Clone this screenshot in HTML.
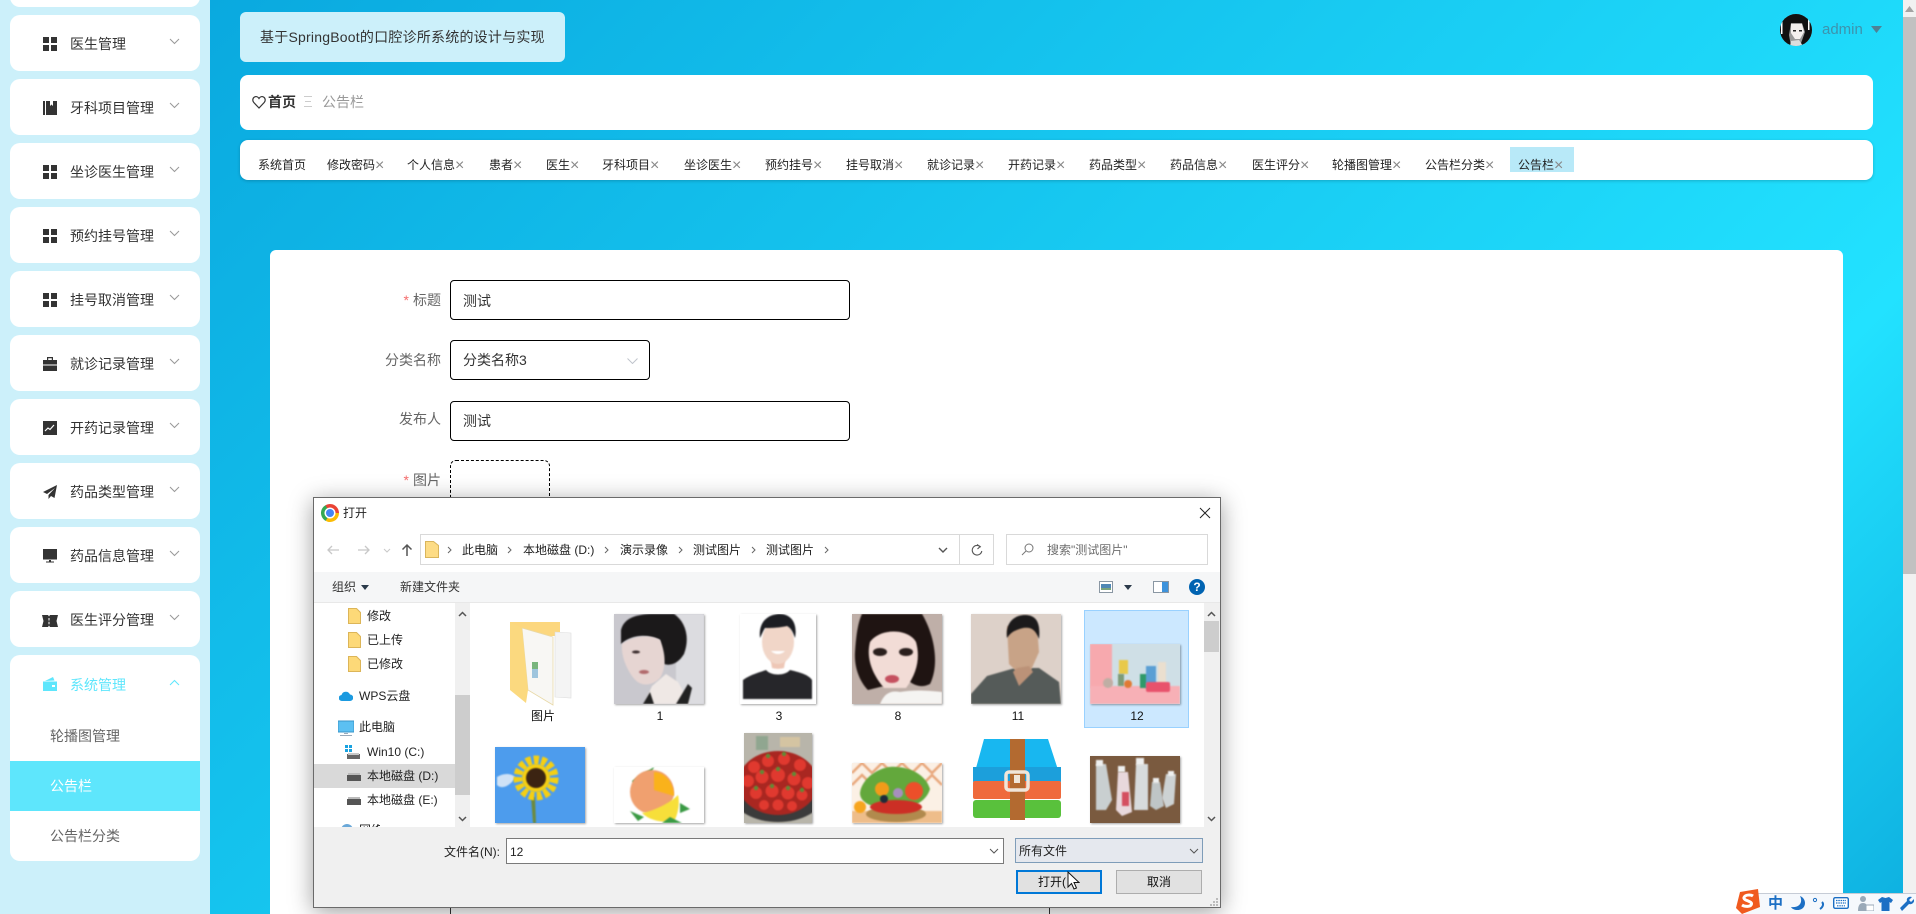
<!DOCTYPE html>
<html lang="zh">
<head>
<meta charset="utf-8">
<title>公告栏</title>
<style>
html,body{margin:0;padding:0;width:1916px;height:914px;overflow:hidden;background:#fff}
body{position:relative;font-family:"Liberation Sans","Noto Sans CJK SC",sans-serif;font-size:14px;color:#333}
.a{position:absolute;box-sizing:border-box}
.t{position:absolute;white-space:nowrap;line-height:1}
svg{position:absolute;display:block;overflow:hidden}
.item{position:absolute;left:10px;width:190px;height:56px;background:#fff;border-radius:10px}
.item .n{position:absolute;left:60px;top:20px;font-size:14px;line-height:18px;color:#333;white-space:nowrap}
.item svg.i{left:33px;top:22px;width:14px;height:14px}
.item svg.c{left:159px;top:23px;width:11px;height:7px}
.sub{position:absolute;left:10px;width:190px;height:50px;line-height:50px;padding-left:40px;box-sizing:border-box;font-size:14px;color:#666}
.tab{position:absolute;top:158px;font-size:12px;line-height:14px;color:#222;white-space:nowrap}
.tab b{font-weight:normal;color:#888;font-size:16px;line-height:12px;vertical-align:-1px}
.lbl{position:absolute;right:1475px;font-size:14px;line-height:16px;color:#666;white-space:nowrap}
.lbl i{font-style:normal;color:#f56c6c;margin-right:4px}
.inp{position:absolute;left:450px;border:1px solid #000;border-radius:4px;background:#fff;box-sizing:border-box}
.inp span{position:absolute;left:12px;top:11px;font-size:14px;line-height:16px;color:#333;white-space:nowrap}
.d{font-size:12px;color:#222}
.sep{position:absolute;top:545px;width:5px;height:10px}
.lab{position:absolute;top:710px;font-size:12px;line-height:13px;color:#111;text-align:center;width:60px;white-space:nowrap}
.ph{box-shadow:1px 1px 2px rgba(0,0,0,.35)}
.ph>*:not(:first-child){filter:blur(.7px)}
</style>
</head>
<body>

<!-- main gradient background -->
<div class="a" style="left:210px;top:0;width:1693px;height:914px;background:linear-gradient(135deg,#0aa9df 0%,#22e2ff 76%,#0eb0e0 100%)"></div>
<!-- sidebar -->
<div class="a" style="left:0;top:0;width:210px;height:914px;background:#ccf0fa"></div>
<div class="a" style="left:10px;top:-40px;width:190px;height:47px;background:#fff;border-radius:10px"></div>

<div class="item" style="top:15px"><svg class="i" viewBox="0 0 14 14"><path fill="#333" d="M0 0h6v6H0zM8 0h6v6H8zM0 8h6v6H0zM8 8h6v6H8z"/></svg><span class="n">医生管理</span><svg class="c" viewBox="0 0 11 7"><path d="M1 1l4.500 4.500L10 1" fill="none" stroke="#999"/></svg></div>
<div class="item" style="top:79px"><svg class="i" viewBox="0 0 14 14"><path fill="#333" d="M0 0h2v14H0zM3 0h4v5l1.500-1.500L10 5V0h4v14H3z"/></svg><span class="n">牙科项目管理</span><svg class="c" viewBox="0 0 11 7"><path d="M1 1l4.500 4.500L10 1" fill="none" stroke="#999"/></svg></div>
<div class="item" style="top:143px"><svg class="i" viewBox="0 0 14 14"><path fill="#333" d="M0 0h6v6H0zM8 0h6v6H8zM0 8h6v6H0zM8 8h6v6H8z"/></svg><span class="n">坐诊医生管理</span><svg class="c" viewBox="0 0 11 7"><path d="M1 1l4.500 4.500L10 1" fill="none" stroke="#999"/></svg></div>
<div class="item" style="top:207px"><svg class="i" viewBox="0 0 14 14"><path fill="#333" d="M0 0h6v6H0zM8 0h6v6H8zM0 8h6v6H0zM8 8h6v6H8z"/></svg><span class="n">预约挂号管理</span><svg class="c" viewBox="0 0 11 7"><path d="M1 1l4.500 4.500L10 1" fill="none" stroke="#999"/></svg></div>
<div class="item" style="top:271px"><svg class="i" viewBox="0 0 14 14"><path fill="#333" d="M0 0h6v6H0zM8 0h6v6H8zM0 8h6v6H0zM8 8h6v6H8z"/></svg><span class="n">挂号取消管理</span><svg class="c" viewBox="0 0 11 7"><path d="M1 1l4.500 4.500L10 1" fill="none" stroke="#999"/></svg></div>
<div class="item" style="top:335px"><svg class="i" viewBox="0 0 14 14"><path fill="#333" d="M4 0h6v3H8.800V1.200H5.200V3H4zM0 3h14v4.500H0zM0 8.500h14V14H0z"/></svg><span class="n">就诊记录管理</span><svg class="c" viewBox="0 0 11 7"><path d="M1 1l4.500 4.500L10 1" fill="none" stroke="#999"/></svg></div>
<div class="item" style="top:399px"><svg class="i" viewBox="0 0 14 14"><path fill="#333" d="M0 0h14v14H0z"/><path d="M2 10l3-3 2 1.500L11 4" fill="none" stroke="#fff" stroke-width="1.200"/></svg><span class="n">开药记录管理</span><svg class="c" viewBox="0 0 11 7"><path d="M1 1l4.500 4.500L10 1" fill="none" stroke="#999"/></svg></div>
<div class="item" style="top:463px"><svg class="i" viewBox="0 0 14 14"><path fill="#333" d="M14 0L0 7l4 2L12 3 5.500 10v4l2.500-3 3.500 2z"/></svg><span class="n">药品类型管理</span><svg class="c" viewBox="0 0 11 7"><path d="M1 1l4.500 4.500L10 1" fill="none" stroke="#999"/></svg></div>
<div class="item" style="top:527px"><svg class="i" viewBox="0 0 14 14"><path fill="#333" d="M0 0h14v10.500H0zM6 11h2v1.500h3v1H3v-1h3z"/></svg><span class="n">药品信息管理</span><svg class="c" viewBox="0 0 11 7"><path d="M1 1l4.500 4.500L10 1" fill="none" stroke="#999"/></svg></div>
<div class="item" style="top:591px"><svg style="left:32px;top:24px;width:16px;height:12px" viewBox="0 0 16 12"><path fill="#333" d="M0 0h6l1 1.500L8 0h8l-1.500 6L16 12H8l-1-1.500L6 12H0l1.500-6z"/><path fill="#fff" d="M6.500 3h1v2.500h-1zM6.500 6.800h1v2.500h-1z"/></svg><span class="n">医生评分管理</span><svg class="c" viewBox="0 0 11 7"><path d="M1 1l4.500 4.500L10 1" fill="none" stroke="#999"/></svg></div>

<!-- system group -->
<div class="a" style="left:10px;top:655px;width:190px;height:206px;background:#fff;border-radius:10px;overflow:hidden">
  <svg style="left:33px;top:22px;width:14px;height:14px" viewBox="0 0 14 14"><path fill="#5ee6fc" d="M0 4.500h14V14H0zM2 4L10 0l1.500 3.500z"/><path fill="#fff" d="M9 8h3v2H9z"/></svg>
  <span class="t" style="left:60px;top:21px;font-size:14px;line-height:18px;color:#5ee6fc">系统管理</span>
  <svg style="left:159px;top:24px;width:11px;height:7px" viewBox="0 0 11 7"><path d="M1 6l4.500-4.500L10 6" fill="none" stroke="#5ee6fc"/></svg>
</div>
<div class="sub" style="top:711px">轮播图管理</div>
<div class="sub" style="top:761px;background:#5ee6fc;color:#fff">公告栏</div>
<div class="sub" style="top:811px">公告栏分类</div>

<!-- title -->
<div class="a" style="left:240px;top:12px;width:325px;height:50px;background:#ccf0fa;border-radius:6px"></div>
<span class="t" style="left:260px;top:29px;font-size:14px;line-height:16px;color:#333;letter-spacing:.22px">基于SpringBoot的口腔诊所系统的设计与实现</span>

<!-- breadcrumb -->
<div class="a" style="left:240px;top:75px;width:1633px;height:55px;background:#fff;border-radius:8px"></div>
<svg style="left:252px;top:95px;width:14px;height:14px" viewBox="0 0 14 14"><path d="M7 13L1.800 7.500C.2 5.800.6 3 2.500 2c1.700-.9 3.500-.2 4.500 1.500C8 1.800 9.800 1.100 11.500 2c1.900 1 2.300 3.800.7 5.500z" fill="none" stroke="#333" stroke-width="1.200"/></svg>
<span class="t" style="left:268px;top:94px;font-size:14px;line-height:16px;font-weight:bold;color:#333">首页</span>
<svg style="left:304px;top:96px;width:8px;height:11px" viewBox="0 0 8 11"><path d="M0 .5h8M1 5.500h6M0 10.500h8" stroke="#ccc"/></svg>
<span class="t" style="left:322px;top:94px;font-size:14px;line-height:16px;color:#999">公告栏</span>

<!-- tabs -->
<div class="a" style="left:240px;top:140px;width:1633px;height:40px;background:#fff;border-radius:8px;box-shadow:0 1px 3px rgba(0,0,0,.2)"></div>
<div class="a" style="left:1510px;top:147px;width:64px;height:25px;background:#b8e9f8"></div>
<span class="tab" style="left:258px">系统首页</span>
<span class="tab" style="left:327px">修改密码<b>×</b></span>
<span class="tab" style="left:407px">个人信息<b>×</b></span>
<span class="tab" style="left:489px">患者<b>×</b></span>
<span class="tab" style="left:546px">医生<b>×</b></span>
<span class="tab" style="left:602px">牙科项目<b>×</b></span>
<span class="tab" style="left:684px">坐诊医生<b>×</b></span>
<span class="tab" style="left:765px">预约挂号<b>×</b></span>
<span class="tab" style="left:846px">挂号取消<b>×</b></span>
<span class="tab" style="left:927px">就诊记录<b>×</b></span>
<span class="tab" style="left:1008px">开药记录<b>×</b></span>
<span class="tab" style="left:1089px">药品类型<b>×</b></span>
<span class="tab" style="left:1170px">药品信息<b>×</b></span>
<span class="tab" style="left:1252px">医生评分<b>×</b></span>
<span class="tab" style="left:1332px">轮播图管理<b>×</b></span>
<span class="tab" style="left:1425px">公告栏分类<b>×</b></span>
<span class="tab" style="left:1518px">公告栏<b>×</b></span>

<!-- user -->
<svg style="left:1780px;top:14px;width:32px;height:32px" viewBox="0 0 32 32">
  <defs><clipPath id="av"><circle cx="16" cy="16" r="16"/></clipPath></defs>
  <g clip-path="url(#av)"><rect width="32" height="32" fill="#999"/><path fill="#111" d="M0 0h32v20l-5 12H20l5-14-3-9H11l-2 12 2 11H3L0 22z"/><path fill="#f4f0ee" d="M11 10h11l2 8-4 7h-5l-4-6z"/><path fill="#222" d="M13 16h3v1.500h-3zM19 16h3v1.500h-3z"/><path fill="#fff" d="M1 6h1.500v14H1zM28 4h1.500v12H28z"/><path fill="#ddd" d="M11 27l8-1 4 6H10z"/></g>
</svg>
<span class="t" style="left:1822px;top:22px;font-size:15px;line-height:16px;color:#3d93ad">admin</span>
<svg style="left:1871px;top:26px;width:11px;height:7px" viewBox="0 0 11 7"><path d="M0 0h11L5.500 7z" fill="#4f8195"/></svg>

<!-- scrollbar -->
<div class="a" style="left:1903px;top:0;width:13px;height:914px;background:#f1f1f1"></div>
<div class="a" style="left:1903px;top:17px;width:13px;height:557px;background:#c1c1c1"></div>
<svg style="left:1905px;top:6px;width:9px;height:6px" viewBox="0 0 9 6"><path d="M4.500 0L9 6H0z" fill="#a3a3a3"/></svg>

<!-- content card -->
<div class="a" style="left:270px;top:250px;width:1573px;height:664px;background:#fff;border-radius:6px 6px 0 0"></div>

<div class="lbl" style="top:292px"><i>*</i>标题</div>
<div class="inp" style="top:280px;width:400px;height:40px"><span style="top:12px">测试</span></div>
<div class="lbl" style="top:352px">分类名称</div>
<div class="inp" style="top:340px;width:200px;height:40px"><span>分类名称3</span></div>
<svg style="left:627px;top:358px;width:11px;height:6px" viewBox="0 0 11 6"><path d="M.5.500l5 5 5-5" fill="none" stroke="#c0c4cc"/></svg>
<div class="lbl" style="top:411px">发布人</div>
<div class="inp" style="top:401px;width:400px;height:40px"><span>测试</span></div>
<div class="lbl" style="top:472px"><i>*</i>图片</div>
<div class="a" style="left:450px;top:460px;width:100px;height:100px;border:1px dashed #000;border-radius:6px"></div>
<div class="a" style="left:450px;top:880px;width:600px;height:34px;border:1px solid #333;border-bottom:none"></div>

<!-- dialog -->
<div class="a" style="left:313px;top:497px;width:908px;height:411px;background:#fff;border:1px solid #6a6a6a;box-shadow:0 4px 22px rgba(0,0,0,.38)"></div>
<div class="a" style="left:321px;top:504px;width:18px;height:18px;border-radius:50%;background:conic-gradient(#ea4335 0 33%,#fbbc05 33% 66%,#34a853 66% 100%);transform:rotate(-30deg)"></div>
<div class="a" style="left:326px;top:509px;width:8px;height:8px;border-radius:50%;background:#4285f4;box-shadow:0 0 0 1.500px #fff"></div>
<span class="t d" style="left:343px;top:507px">打开</span>
<svg style="left:1199px;top:507px;width:12px;height:12px" viewBox="0 0 12 12"><path d="M1 1l10 10M11 1L1 11" stroke="#222"/></svg>

<!-- nav arrows -->
<svg style="left:326px;top:543px;width:90px;height:14px" viewBox="0 0 90 14"><path d="M13 7H2M6 3L2 7l4 4M32 7h11M39 3l4 4-4 4" fill="none" stroke="#c8c8c8" stroke-width="1.300"/><path d="M58 6l3 3 3-3" fill="none" stroke="#c8c8c8"/><path d="M81 13V2M76.500 6.500L81 2l4.500 4.500" fill="none" stroke="#555" stroke-width="1.500"/></svg>

<!-- address -->
<div class="a" style="left:420px;top:534px;width:574px;height:31px;background:#fff;border:1px solid #d9d9d9"></div>
<div class="a" style="left:959px;top:534px;width:1px;height:31px;background:#d9d9d9"></div>
<svg style="left:425px;top:541px;width:14px;height:17px" viewBox="0 0 14 17"><path d="M.5.500h8l5 4v12H.5z" fill="#fddc85" stroke="#d9b55c"/></svg>
<svg class="sep" style="left:447px" viewBox="0 0 5 10"><path d="M1 2l3 3-3 3" fill="none" stroke="#666"/></svg>
<span class="t d" style="left:462px;top:544px">此电脑</span>
<svg class="sep" style="left:507px" viewBox="0 0 5 10"><path d="M1 2l3 3-3 3" fill="none" stroke="#666"/></svg>
<span class="t d" style="left:523px;top:544px">本地磁盘 (D:)</span>
<svg class="sep" style="left:604px" viewBox="0 0 5 10"><path d="M1 2l3 3-3 3" fill="none" stroke="#666"/></svg>
<span class="t d" style="left:620px;top:544px">演示录像</span>
<svg class="sep" style="left:678px" viewBox="0 0 5 10"><path d="M1 2l3 3-3 3" fill="none" stroke="#666"/></svg>
<span class="t d" style="left:693px;top:544px">测试图片</span>
<svg class="sep" style="left:751px" viewBox="0 0 5 10"><path d="M1 2l3 3-3 3" fill="none" stroke="#666"/></svg>
<span class="t d" style="left:766px;top:544px">测试图片</span>
<svg class="sep" style="left:824px" viewBox="0 0 5 10"><path d="M1 2l3 3-3 3" fill="none" stroke="#666"/></svg>
<svg style="left:938px;top:547px;width:10px;height:6px" viewBox="0 0 10 6"><path d="M1 1l4 4 4-4" fill="none" stroke="#555" stroke-width="1.400"/></svg>
<svg style="left:971px;top:544px;width:12px;height:12px" viewBox="0 0 12 12"><path d="M9.800 3.200A4.800 4.800 0 1 0 10.800 7M6 .5l3 2.200L6.500 5" fill="none" stroke="#555" stroke-width="1.100"/></svg>

<!-- search -->
<div class="a" style="left:1006px;top:534px;width:202px;height:31px;background:#fff;border:1px solid #d9d9d9"></div>
<svg style="left:1021px;top:543px;width:13px;height:13px" viewBox="0 0 13 13"><circle cx="8" cy="5" r="4" fill="none" stroke="#777"/><path d="M5 8l-4 4" stroke="#777"/></svg>
<span class="t" style="left:1047px;top:544px;font-size:12px;color:#6d6d6d">搜索"测试图片"</span>

<!-- toolbar -->
<div class="a" style="left:314px;top:572px;width:906px;height:31px;background:#f5f6f7;border-bottom:1px solid #e8e8e8"></div>
<span class="t" style="left:332px;top:581px;font-size:12px;color:#333">组织</span>
<svg style="left:361px;top:585px;width:8px;height:5px" viewBox="0 0 8 5"><path d="M0 0h8L4 5z" fill="#2b3a4a"/></svg>
<span class="t" style="left:400px;top:581px;font-size:12px;color:#333">新建文件夹</span>
<svg style="left:1099px;top:581px;width:14px;height:12px" viewBox="0 0 14 12"><rect x=".5" y=".5" width="13" height="11" fill="#fff" stroke="#8a97a3"/><path d="M2 3h10v4H2z" fill="#4f87b5"/><path d="M2 7h10v2H2z" fill="#79a37d"/></svg>
<svg style="left:1124px;top:585px;width:8px;height:5px" viewBox="0 0 8 5"><path d="M0 0h8L4 5z" fill="#2b3a4a"/></svg>
<svg style="left:1153px;top:581px;width:16px;height:12px" viewBox="0 0 16 12"><rect x=".5" y=".5" width="15" height="11" fill="#fff" stroke="#8a97a3"/><path d="M9 1h6v10H9z" fill="#3d93dc"/></svg>
<div class="a" style="left:1189px;top:579px;width:16px;height:16px;border-radius:50%;background:#0063b1;color:#fff;font-size:12px;font-weight:bold;line-height:16px;text-align:center">?</div>

<!-- nav pane -->
<div class="a" style="left:455px;top:603px;width:15px;height:224px;background:#f0f0f0"></div>
<div class="a" style="left:455px;top:695px;width:15px;height:100px;background:#cdcdcd"></div>
<svg style="left:458px;top:611px;width:9px;height:6px" viewBox="0 0 9 6"><path d="M1 5l3.500-3.500L8 5" fill="none" stroke="#555" stroke-width="1.500"/></svg>
<svg style="left:458px;top:816px;width:9px;height:6px" viewBox="0 0 9 6"><path d="M1 1l3.500 3.500L8 1" fill="none" stroke="#555" stroke-width="1.500"/></svg>
<div class="a" style="left:314px;top:764px;width:141px;height:24px;background:#d9d9d9"></div>

<svg style="left:348px;top:608px;width:13px;height:16px" viewBox="0 0 13 16"><path d="M.5.500h8l4 4v11H.5z" fill="#fdd978" stroke="#dcb558"/></svg>
<span class="t d" style="left:367px;top:610px">修改</span>
<svg style="left:348px;top:632px;width:13px;height:16px" viewBox="0 0 13 16"><path d="M.5.500h8l4 4v11H.5z" fill="#fdd978" stroke="#dcb558"/></svg>
<span class="t d" style="left:367px;top:634px">已上传</span>
<svg style="left:348px;top:656px;width:13px;height:16px" viewBox="0 0 13 16"><path d="M.5.500h8l4 4v11H.5z" fill="#fdd978" stroke="#dcb558"/></svg>
<span class="t d" style="left:367px;top:658px">已修改</span>
<svg style="left:339px;top:690px;width:14px;height:12px" viewBox="0 0 14 12"><path d="M3 11a3 3 0 0 1-.5-6A4.500 4.500 0 0 1 11 4.500 3.200 3.200 0 0 1 11 11z" fill="#1b9ae0"/></svg>
<span class="t d" style="left:359px;top:690px">WPS云盘</span>
<svg style="left:338px;top:720px;width:16px;height:16px" viewBox="0 0 16 16"><rect x="0" y="1" width="16" height="11" fill="#5cc0f2" stroke="#3a96c9"/><path d="M6 13h4v1H6zM2 15h12v1H2z" fill="#9ab"/></svg>
<span class="t d" style="left:359px;top:721px">此电脑</span>
<svg style="left:345px;top:745px;width:16px;height:14px" viewBox="0 0 16 14"><path d="M0 0h3v3H0zM4 0h3v3H4zM0 4h3v3H0zM4 4h3v3H4z" fill="#19a2e0"/><path d="M2 9h13v5H2z" fill="#666"/><path d="M3 8h11v2H3z" fill="#c8c8c8"/></svg>
<span class="t d" style="left:367px;top:746px">Win10 (C:)</span>
<svg style="left:347px;top:771px;width:14px;height:10px" viewBox="0 0 14 10"><path d="M0 4h14v6H0z" fill="#555"/><path d="M1 2h12v2H1z" fill="#bbb"/></svg>
<span class="t d" style="left:367px;top:770px">本地磁盘 (D:)</span>
<svg style="left:347px;top:795px;width:14px;height:10px" viewBox="0 0 14 10"><path d="M0 4h14v6H0z" fill="#555"/><path d="M1 2h12v2H1z" fill="#bbb"/></svg>
<span class="t d" style="left:367px;top:794px">本地磁盘 (E:)</span>
<div class="a" style="left:340px;top:824px;width:40px;height:3px;overflow:hidden"><span class="t d" style="left:19px;top:0">网络</span><div class="a" style="left:1px;top:0;width:12px;height:12px;border-radius:50%;background:#6aa8d8"></div></div>

<!-- file list scrollbar -->
<div class="a" style="left:1204px;top:603px;width:16px;height:224px;background:#f0f0f0"></div>
<div class="a" style="left:1204px;top:621px;width:15px;height:31px;background:#cdcdcd"></div>
<svg style="left:1207px;top:611px;width:9px;height:6px" viewBox="0 0 9 6"><path d="M1 5l3.500-3.500L8 5" fill="none" stroke="#555" stroke-width="1.500"/></svg>
<svg style="left:1207px;top:816px;width:9px;height:6px" viewBox="0 0 9 6"><path d="M1 1l3.500 3.500L8 1" fill="none" stroke="#555" stroke-width="1.500"/></svg>

<!-- selected -->
<div class="a" style="left:1084px;top:610px;width:105px;height:118px;background:#cce8ff;border:1px solid #99d1ff"></div>

<!-- folder thumb -->
<svg style="left:508px;top:620px;width:68px;height:86px" viewBox="0 0 68 86"><path d="M2 2h50v14H2z" fill="#fcd77e"/><path d="M47 12l16 1v65l-16-1z" fill="#f4f4f4" stroke="#ddd" stroke-width=".6"/><path d="M14 8l31 9v68L20 70z" fill="#f8f7f4" stroke="#e8d9a8" stroke-width=".8"/><path d="M2 2l12 6 6 62-2 13L2 70z" fill="#fbd97f"/><rect x="24" y="42" width="6" height="7" fill="#79b57d"/><rect x="24" y="49" width="6" height="9" fill="#9fc5dd"/></svg>
<span class="lab" style="left:513px">图片</span>

<!-- photo 1 -->
<svg class="ph" style="left:614px;top:614px;width:90px;height:90px" viewBox="0 0 90 90"><rect width="90" height="90" fill="#c9c8ce"/><path d="M62 0h28v90H62z" fill="#dcdce0"/><path d="M7 16C10 4 22 0 40 0h20c12 8 16 24 10 40-6 10-14 12-20 10L46 26C34 20 18 20 7 30z" fill="#1b191a"/><path d="M8 30c10-8 28-10 38-4 6 14 6 28 0 38-8 8-20 10-28-2C11 52 7 40 8 30z" fill="#e6d5d2"/><path d="M38 72l14-12 12 8 12 22H30z" fill="#efe8e5"/><path d="M29 90l7-12 4 12zM62 90l12-20 4 4-4 16z" fill="#222"/><ellipse cx="30" cy="58" rx="5" ry="2" fill="#b16a6c"/><ellipse cx="22" cy="38" rx="4" ry="1.500" fill="#3a2c2c"/></svg>
<span class="lab" style="left:630px">1</span>

<!-- photo 3 -->
<svg class="ph" style="left:740px;top:614px;width:76px;height:90px" viewBox="0 0 76 90"><rect width="76" height="90" fill="#fff"/><path d="M3 85V66c8-6 18-8 23-10 5 6 19 6 24 0 8 2 18 4 22 10v19z" fill="#26262a"/><path d="M30 42h16l-2 12a12 6 0 0 1-12 0z" fill="#eec7b6"/><ellipse cx="38" cy="28" rx="16" ry="22" fill="#f1d6c8"/><path d="M20 24C18 6 30 0 40 0s18 8 15 24c-2-6-4-10-8-12-8 2-18 2-22 2-2 3-3 6-5 10z" fill="#1c1d22"/><path d="M31 37c4 4 10 4 14 0z" fill="#fff"/></svg>
<span class="lab" style="left:749px">3</span>

<!-- photo 8 -->
<svg class="ph" style="left:852px;top:614px;width:90px;height:90px" viewBox="0 0 90 90"><rect width="90" height="90" fill="#bfafa8"/><path d="M10 0h60c12 20 18 50 8 70-8 4-16 2-22-4L16 76C8 68 2 54 3 38 4 22 6 8 10 0z" fill="#1f1412"/><path d="M18 28c10-14 38-14 46 0 4 14 2 30-10 46H32C20 60 14 44 18 28z" fill="#f2dcd6"/><ellipse cx="28" cy="38" rx="7" ry="4" fill="#2a1f1d"/><ellipse cx="54" cy="38" rx="7" ry="4" fill="#2a1f1d"/><ellipse cx="40" cy="65" rx="7" ry="4" fill="#c5505f"/><path d="M28 90c4-10 10-14 20-12 12-2 24-2 42 0v12z" fill="#f5f4f2"/></svg>
<span class="lab" style="left:868px">8</span>

<!-- photo 11 -->
<svg class="ph" style="left:971px;top:614px;width:90px;height:90px" viewBox="0 0 90 90"><rect width="90" height="90" fill="#ddd1c9"/><path d="M0 80l16-18 28-8 24 0 20 14 2 22H0z" fill="#555b59"/><path d="M36 12h30l2 26-8 18-12 4-10-10z" fill="#c8a387"/><path d="M36 24C34 8 44 1 54 1s16 6 14 24c-4-10-8-12-16-11-8 2-12 4-16 10z" fill="#1c1a1b"/><path d="M42 58l6 14 14-14-4-6-12 2z" fill="#bb9278"/></svg>
<span class="lab" style="left:988px">11</span>

<!-- photo 12 -->
<svg class="ph" style="left:1090px;top:644px;width:90px;height:60px" viewBox="0 0 90 60"><rect width="90" height="60" fill="#cfdfe6"/><rect width="22" height="44" fill="#f7a9ae"/><path d="M0 42h90v18H0z" fill="#f7b0b6"/><rect x="29" y="16" width="9" height="14" fill="#e8c94a"/><rect x="28" y="30" width="6" height="12" fill="#7d9b77"/><rect x="50" y="30" width="8" height="14" fill="#2f9a6a"/><rect x="56" y="22" width="10" height="22" fill="#5a9fd4"/><rect x="68" y="18" width="8" height="22" fill="#eadfcf"/><rect x="56" y="38" width="24" height="10" rx="2" fill="#e8526c"/><circle cx="38" cy="40" r="4" fill="#e07a34"/><circle cx="18" cy="39" r="5" fill="#bfaea4"/></svg>
<span class="lab" style="left:1107px">12</span>

<!-- row 2 -->
<svg class="ph" style="left:495px;top:747px;width:90px;height:76px" viewBox="0 0 90 76"><rect width="90" height="76" fill="#4d9ced"/><path d="M2 30c6-4 14-4 18 0-2 6-12 14-18 8z" fill="#cfe2f6"/><path d="M36 50l2 26h3l-1-26z" fill="#6d8a3e"/><circle cx="41" cy="31" r="14" fill="#f5cf13"/><circle cx="41" cy="31" r="18" fill="none" stroke="#f5cf13" stroke-width="9" stroke-dasharray="5 2.500"/><circle cx="41" cy="31" r="10" fill="#3c2412"/></svg>
<svg class="ph" style="left:614px;top:767px;width:90px;height:56px" viewBox="0 0 90 56"><rect width="90" height="56" fill="#fff"/><path d="M18 14L40 0l-6 14-10 8z" fill="#3e9a45"/><circle cx="38" cy="25" r="22" fill="#f0a06f"/><path d="M40 5c10 0 20 10 20 24l-20-6z" fill="#fab21b"/><path d="M28 46c12-2 28-10 36-18 2 8 0 20-4 26-10 2-24 0-32-8z" fill="#f7df3a"/><path d="M16 44l14 6-6 4zM56 50l12 6H48zM66 36l10 6-10 4z" fill="#3a9a44"/></svg>
<svg class="ph" style="left:744px;top:733px;width:68px;height:90px" viewBox="0 0 68 90"><rect width="68" height="90" fill="#b8b5aa"/><rect x="12" y="3" width="12" height="14" fill="#90a690"/><rect x="36" y="4" width="20" height="10" fill="#d4c4a2"/><ellipse cx="34" cy="64" rx="44" ry="25" fill="#3b3b3b"/><ellipse cx="34" cy="50" rx="40" ry="32" fill="#a92721"/><g fill="#e0392f"><circle cx="10" cy="34" r="6"/><circle cx="24" cy="28" r="6"/><circle cx="40" cy="26" r="6"/><circle cx="56" cy="32" r="6"/><circle cx="4" cy="48" r="6"/><circle cx="18" cy="44" r="6.500"/><circle cx="34" cy="42" r="7"/><circle cx="50" cy="46" r="6.500"/><circle cx="64" cy="50" r="6"/><circle cx="12" cy="60" r="6"/><circle cx="28" cy="58" r="6.500"/><circle cx="44" cy="60" r="6.500"/><circle cx="58" cy="62" r="5.500"/><circle cx="34" cy="72" r="5.500"/><circle cx="20" cy="72" r="5"/><circle cx="48" cy="73" r="5"/></g><g fill="#5f8a35"><circle cx="24" cy="23" r="2.200"/><circle cx="40" cy="21" r="2.200"/><circle cx="18" cy="39" r="2.200"/><circle cx="34" cy="36" r="2.200"/><circle cx="50" cy="41" r="2.200"/><circle cx="28" cy="53" r="2.200"/><circle cx="44" cy="55" r="2.200"/><circle cx="12" cy="55" r="2.200"/><circle cx="58" cy="57" r="2.200"/></g></svg>
<svg class="ph" style="left:852px;top:763px;width:90px;height:60px" viewBox="0 0 90 60"><rect width="90" height="60" fill="#fbf0e5"/><path d="M0 10l10-10 10 10 10-10 10 10 10-10 10 10 10-10 10 10 10-10M0 22l10-10 10 10M70 22l10-10 10 10" fill="none" stroke="#e8a77d" stroke-width="2.500"/><path d="M0 48h90v12H0z" fill="#eebd8a"/><path d="M8 30C10 14 30 2 44 4c14 0 30 8 34 22-4 14-20 20-36 20S8 42 8 30z" fill="#63a83c"/><circle cx="30" cy="26" r="7" fill="#f29b1a"/><circle cx="62" cy="28" r="9" fill="#ec4f2a"/><circle cx="46" cy="30" r="5" fill="#a78fbe"/><ellipse cx="44" cy="51" rx="30" ry="8" fill="#b18a4d"/><ellipse cx="44" cy="44" rx="26" ry="7" fill="#cc2f25"/><circle cx="32" cy="36" r="4" fill="#1f2b3a"/><circle cx="8" cy="44" r="6" fill="#f7a51f"/></svg>
<svg style="left:973px;top:739px;width:88px;height:81px" viewBox="0 0 88 81"><path d="M11 0h64l13 40v3H0v-3z" fill="#18b7f0"/><path d="M0 28h88v14H0z" fill="#1c9fdb"/><rect x="0" y="42" width="88" height="18" rx="2" fill="#ef6a3c"/><rect x="0" y="61" width="88" height="18" rx="3" fill="#59c13c"/><rect x="37" y="0" width="15" height="81" fill="#b36a30"/><rect x="33" y="33" width="22" height="18" rx="3" fill="none" stroke="#f0e6da" stroke-width="3.500"/><rect x="41" y="36" width="6" height="8" fill="#f0e6da"/></svg>
<svg class="ph" style="left:1090px;top:756px;width:90px;height:67px" viewBox="0 0 90 67"><rect width="90" height="67" fill="#7a5a3f"/><path d="M6 8h10l6 36-6 10H6z" fill="#c9cfd0"/><path d="M28 16h10l4 40-10 4-6-6z" fill="#e8d8dc"/><rect x="32" y="36" width="7" height="14" fill="#d44f60"/><path d="M46 8h12v46H44z" fill="#d7dbdc"/><path d="M62 26h8l4 24-8 4-6-4z" fill="#bfc5c6"/><path d="M76 18h10l-2 30-8 4-4-10z" fill="#cdd2d3"/><g fill="#eef0f0"><rect x="6" y="4" width="7" height="6"/><rect x="28" y="10" width="7" height="6"/><rect x="46" y="2" width="8" height="7"/><rect x="63" y="22" width="6" height="5"/><rect x="78" y="15" width="6" height="5"/></g></svg>

<!-- footer -->
<div class="a" style="left:314px;top:827px;width:906px;height:80px;background:#f0f0f0"></div>
<span class="t" style="left:444px;top:846px;font-size:12px;color:#222">文件名(N):</span>
<div class="a" style="left:506px;top:838px;width:498px;height:26px;background:#fff;border:1px solid #7a7a7a"></div>
<span class="t" style="left:510px;top:846px;font-size:12px;color:#222">12</span>
<svg style="left:989px;top:848px;width:10px;height:6px" viewBox="0 0 10 6"><path d="M1 1l4 4 4-4" fill="none" stroke="#555"/></svg>
<div class="a" style="left:1015px;top:838px;width:188px;height:25px;background:#e5e8ee;border:1px solid #7f9db9"></div>
<span class="t" style="left:1019px;top:845px;font-size:12px;color:#222">所有文件</span>
<svg style="left:1189px;top:848px;width:10px;height:6px" viewBox="0 0 10 6"><path d="M1 1l4 4 4-4" fill="none" stroke="#555"/></svg>
<div class="a" style="left:1016px;top:870px;width:86px;height:24px;background:#e1e1e1;border:2px solid #0078d7"></div>
<span class="t" style="left:1038px;top:876px;font-size:12px;color:#111">打开(</span>
<div class="a" style="left:1116px;top:870px;width:86px;height:24px;background:#e1e1e1;border:1px solid #adadad"></div>
<span class="t" style="left:1147px;top:876px;font-size:12px;color:#111">取消</span>
<svg style="left:1067px;top:871px;width:13px;height:20px" viewBox="0 0 13 20"><path d="M1 1v15l3.500-3.500L7 18l2.500-1-2.500-5.500h5z" fill="#fff" stroke="#111"/></svg>
<svg style="left:1209px;top:897px;width:9px;height:9px" viewBox="0 0 9 9"><path d="M7 1h2v2H7zM4 4h2v2H4zM7 4h2v2H7zM1 7h2v2H1zM4 7h2v2H4zM7 7h2v2H7z" fill="#bbb"/></svg>

<!-- IME bar -->
<div class="a" style="left:1745px;top:893px;width:171px;height:21px;background:#f5f8fc;border-top:1px solid #c6ccd6"></div>
<svg style="left:1735px;top:889px;width:25px;height:25px" viewBox="0 0 25 25"><path d="M5 3l18-3 2 18-18 7-6-6z" fill="#f05a1f"/><path d="M18 7c-2-1.500-8-1.500-9 1.500S17 12 16.500 15 10 18 7 16" fill="none" stroke="#fff" stroke-width="3"/></svg>
<span class="t" style="left:1768px;top:896px;font-size:15px;font-weight:bold;color:#1c6fc4">中</span>
<svg style="left:1791px;top:896px;width:14px;height:15px" viewBox="0 0 14 15"><path d="M9 0c3 6 0 12-9 11 3 5 14 4 14-4 0-3-2-6-5-7z" fill="#1c6fc4"/></svg>
<svg style="left:1812px;top:897px;width:13px;height:13px" viewBox="0 0 13 13"><circle cx="3" cy="3" r="1.600" fill="none" stroke="#1c6fc4"/><path d="M10 5c2 2 1 5-2 7" fill="none" stroke="#1c6fc4" stroke-width="2"/></svg>
<svg style="left:1833px;top:897px;width:16px;height:12px" viewBox="0 0 16 12"><rect x=".7" y=".7" width="14.600" height="10.600" rx="1.500" fill="#fff" stroke="#1c6fc4" stroke-width="1.400"/><path d="M3 3.500h10M3 6h10M4 8.800h8" stroke="#1c6fc4" stroke-width="1.200" stroke-dasharray="1.500 .8"/></svg>
<svg style="left:1857px;top:896px;width:17px;height:15px" viewBox="0 0 17 15"><circle cx="6" cy="3" r="3" fill="#9aa9b8"/><path d="M1 15c0-6 2-8 5-8s5 2 5 8z" fill="#9aa9b8"/><rect x="9" y="9" width="8" height="6" fill="#fff" stroke="#9aa9b8"/></svg>
<svg style="left:1878px;top:897px;width:15px;height:14px" viewBox="0 0 15 14"><path d="M4 0l3.500 1L11 0l4 3-2 3-1.500-1v9h-8V5L2 6 0 3z" fill="#1c6fc4"/></svg>
<svg style="left:1900px;top:896px;width:14px;height:15px" viewBox="0 0 14 15"><path d="M14 3l-3 3-2-2 3-3C9 0 6 2 7 5L0 12l2 3 7-7c3 1 6-2 5-5z" fill="#1c6fc4"/></svg>

</body>
</html>
